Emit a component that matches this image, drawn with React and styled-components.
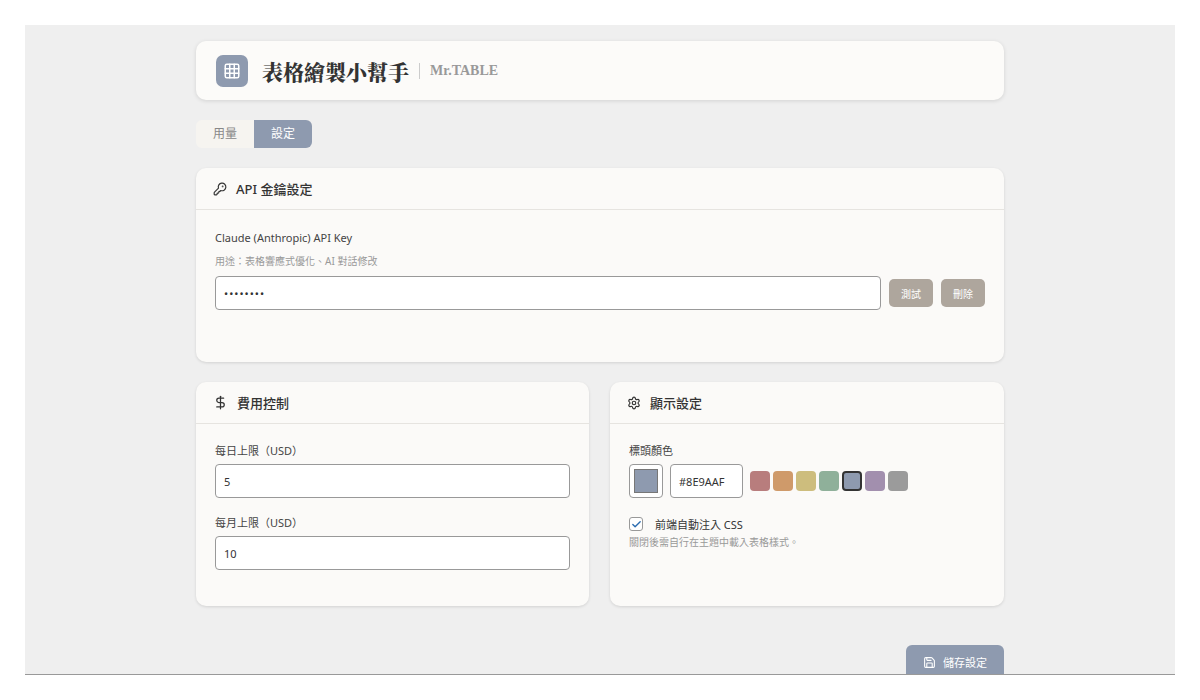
import React from "react";
import styled, { createGlobalStyle } from "styled-components";
import { Grid3x3, KeyRound, DollarSign, Settings, Save, Check } from "lucide-react";

const G = createGlobalStyle`
  body{margin:0;background:#fff;font-family:"Noto Sans","Noto Sans CJK TC",sans-serif;color:#333;}
  *{box-sizing:border-box;}
`;
const Frame = styled.div`padding:25px;height:700px;`;
const Stage = styled.div`height:650px;background:#efefef;overflow:hidden;border-bottom:1px solid #999;`;
const Col = styled.div`width:808px;margin:0 auto;padding-top:16px;display:flex;flex-direction:column;`;
const Header = styled.div`height:59px;background:#fcfbf9;border-radius:10px;box-shadow:0 1px 4px rgba(0,0,0,.12);display:flex;align-items:center;padding:0 20px;gap:14px;`;
const Logo = styled.div`width:32px;height:32px;border-radius:7px;background:#8e9aaf;display:flex;align-items:center;justify-content:center;color:#fff;`;
const Title = styled.h1`margin:0;font-family:"Noto Serif CJK TC","Noto Sans CJK TC",serif;font-weight:900;font-size:21px;color:#333;display:flex;align-items:center;`;
const Sub = styled.span`font-family:"Liberation Serif",serif;font-weight:700;font-size:14px;color:#999;margin-left:10px;display:flex;align-items:center;gap:10px;&::before{content:"";width:1px;height:16px;background:#ccc;}`;
const Tabs = styled.div`display:flex;margin-top:20px;`;
const Tab = styled.div`padding:0 17px;height:28px;line-height:28px;font-size:12px;border-radius:${p=>p.$first?"6px 0 0 6px":"0 6px 6px 0"};background:${p=>p.$on?"#8e9aaf":"#f6f4f0"};color:${p=>p.$on?"#fff":"#888"};`;
const Card = styled.div`background:#fbfaf8;border-radius:10px;box-shadow:0 1px 3px rgba(0,0,0,.12);display:flex;flex-direction:column;`;
const CardHead = styled.div`height:42px;border-bottom:1px solid #e6e4e0;display:flex;align-items:center;gap:9px;padding:0 17px;font-size:13px;font-weight:500;color:#333;`;
const CardBody = styled.div`padding:${p=>p.$p||"20px 19px"};flex:1;`;
const Label = styled.div`font-size:11px;color:#444;margin-bottom:${p=>p.$mb||6}px;`;
const Hint = styled.div`font-size:10px;color:#999;margin-bottom:${p=>p.$mb||0}px;`;
const Row = styled.div`display:flex;align-items:center;gap:${p=>p.$gap||6}px;`;
const Input = styled.div`height:34px;flex:${p=>p.$w?"none":1};width:${p=>p.$w||"auto"};border:1px solid #999;border-radius:4px;background:#fff;font-size:11px;display:flex;align-items:center;padding:0 8px;color:#333;letter-spacing:${p=>p.$ls||0}px;`;
const Btn = styled.div`height:28px;padding:0 12px;border-radius:5px;background:#aea69d;color:#fff;font-size:10px;display:flex;align-items:center;margin-left:2px;`;
const Two = styled.div`display:grid;grid-template-columns:393px 394px;gap:21px;margin-top:20px;height:224px;`;
const Swatch = styled.div`width:20px;height:20px;border-radius:4px;background:${p=>p.$c};border:${p=>p.$sel?"2px solid #333":"none"};`;
const Picker = styled.div`width:34px;height:34px;border:1px solid #999;border-radius:4px;background:#fff;padding:4px;&>div{width:100%;height:100%;background:#8e9aaf;border:1px solid #777;}`;
const CheckBox = styled.div`width:14px;height:14px;border:1px solid #999;border-radius:3px;background:#fff;display:flex;align-items:center;justify-content:center;color:#2b6cb0;`;
const SaveRow = styled.div`display:flex;justify-content:flex-end;margin-top:39px;`;
const SaveBtn = styled.div`height:34px;width:98px;background:#8e9aaf;border-radius:6px 6px 0 0;color:#fff;font-size:11px;display:flex;align-items:center;justify-content:center;gap:7px;`;

const colors=["#b87d7d","#cf9a6a","#cdbd7d","#8fb09a","#8e9aaf","#a28fae","#9b9b9b"];

export default function App(){
  return <><G/><Frame><Stage><Col>
    <Header><Logo><Grid3x3 size={18}/></Logo><Title>表格繪製小幫手<Sub>Mr.TABLE</Sub></Title></Header>
    <Tabs><Tab $first>用量</Tab><Tab $on>設定</Tab></Tabs>
    <Card style={{marginTop:20,height:194}}>
      <CardHead><KeyRound size={14}/>API 金鑰設定</CardHead>
      <CardBody $p="20px 19px">
        <Label $mb={8}>Claude (Anthropic) API Key</Label>
        <Hint $mb={8}>用途：表格響應式優化、AI 對話修改</Hint>
        <Row><Input $ls={1}>••••••••</Input><Btn>測試</Btn><Btn>刪除</Btn></Row>
      </CardBody>
    </Card>
    <Two>
      <Card>
        <CardHead><DollarSign size={15}/>費用控制</CardHead>
        <CardBody $p="18px 19px">
          <Label>每日上限（USD）</Label>
          <Input>5</Input>
          <Label style={{marginTop:16}}>每月上限（USD）</Label>
          <Input>10</Input>
        </CardBody>
      </Card>
      <Card>
        <CardHead><Settings size={14}/>顯示設定</CardHead>
        <CardBody $p="18px 19px">
          <Label>標頭顏色</Label>
          <Row $gap={7}>
            <Picker><div/></Picker>
            <Input $w="73px">#8E9AAF</Input>
            <Row $gap={3}>{colors.map((c,i)=><Swatch key={c} $c={c} $sel={i===4}/>)}</Row>
          </Row>
          <Row $gap={12} style={{marginTop:18}}><CheckBox><Check size={11} strokeWidth={3}/></CheckBox><span style={{fontSize:11}}>前端自動注入 CSS</span></Row>
          <Hint style={{marginTop:2}}>關閉後需自行在主題中載入表格樣式。</Hint>
        </CardBody>
      </Card>
    </Two>
    <SaveRow><SaveBtn><Save size={13}/>儲存設定</SaveBtn></SaveRow>
  </Col></Stage></Frame></>;
}
